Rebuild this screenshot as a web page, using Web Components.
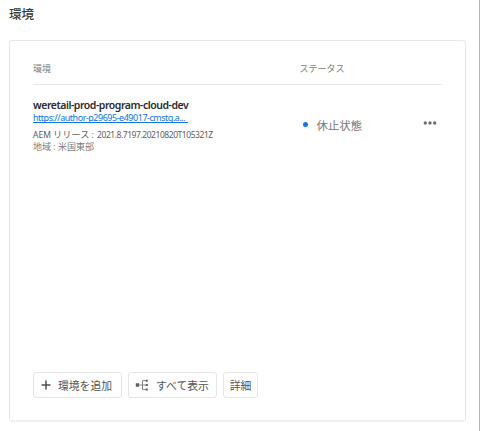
<!DOCTYPE html>
<html lang="ja">
<head>
<meta charset="utf-8">
<title>環境</title>
<style>
html,body{margin:0;height:100%}
body{background:#fff;font-family:"Noto Sans","Noto Sans CJK JP",sans-serif;overflow:hidden}
</style>
</head>
<body>
<env-page>
  <env-card>
    <env-head slot="head"><span>環境</span><span slot="status">ステータス</span></env-head>
    <env-row>
      <span slot="name">weretail-prod-program-cloud-dev</span>
      <span slot="link">https://author-p29695-e49017-cmstg.a...</span>
      <span slot="release">AEM <span style="font-size:9.2px">リリース</span> : <span style="letter-spacing:-.45px;margin-left:1px">2021.8.7197.20210820T105321Z</span></span>
      <span slot="region">地域 : 米国東部</span>
      <span slot="status">休止状態</span>
    </env-row>
    <env-button slot="actions" icon="add" style="width:89px">環境を追加</env-button>
    <env-button slot="actions" icon="tree" style="width:89px">すべて表示</env-button>
    <env-button slot="actions" style="width:35px">詳細</env-button>
  </env-card>
</env-page>
<script>
const define = (name, html, setup) => customElements.define(name, class extends HTMLElement {
  constructor() {
    super();
    this.attachShadow({ mode: 'open' }).innerHTML = html;
    if (setup) setup(this);
  }
});

define('env-page', `<style>
:host{display:flex;flex-direction:column;box-sizing:border-box;width:480px;height:431px;padding:4px 13px 9px 9px;border-right:1px solid #b4b4b4}
h1{margin:0 0 16px;height:20px;font-size:12.5px;line-height:19px;font-weight:500;font-family:"Noto Sans CJK JP",sans-serif;color:#3a3a3a}
</style><h1>環境</h1><slot></slot>`);

define('env-card', `<style>
:host{display:flex;flex-direction:column;flex:1;box-sizing:border-box;border:1px solid #e8e8e8;border-bottom:2px solid #f0f0f0;border-radius:3px;padding:20px 23px 22px}
.body{flex:1}
.actions{display:flex;gap:6px;height:26px}
</style><slot name="head"></slot><div class="body"><slot></slot></div><div class="actions"><slot name="actions"></slot></div>`);

define('env-head', `<style>
:host{display:grid;grid-template-columns:266.5px 1fr;height:23px;border-bottom:1px solid #e8e8e8;font:9px/16px "Noto Sans CJK JP",sans-serif;color:#7c7c7c}
</style><div><slot></slot></div><div><slot name="status"></slot></div>`);

define('env-row', `<style>
:host{display:grid;grid-template-columns:267px 1fr auto;padding-top:12px;color:#6e6e6e}
.info{display:flex;flex-direction:column;align-items:flex-start;white-space:nowrap}
.name{font-size:10.5px;line-height:16px;height:14px;font-weight:600;color:#2c2c2c;letter-spacing:-.47px}
.link{box-sizing:border-box;width:155px;height:12px;font-size:9px;line-height:13px;color:#1473e6;letter-spacing:-.48px;border-bottom:1px solid #1473e6;text-decoration:none}
.meta{font-size:8.5px;line-height:12px;height:12px}
.release{margin-top:6px;color:#606060}
.region{font-size:9px;color:#7a7a7a}
.status{display:flex;align-items:center;height:20px;margin-top:18px;font:11.4px/20px "Noto Sans CJK JP",sans-serif;color:#777}
.dot{width:5px;height:5px;border-radius:50%;background:#1473e6;margin:-2px 9px 0 2.5px}
.more{width:14px;height:4px;margin:24px 5px 0 0;fill:#6e6e6e}
</style>
<div class="info">
<div class="name"><slot name="name"></slot></div>
<a class="link"><slot name="link"></slot></a>
<div class="meta release"><slot name="release"></slot></div>
<div class="meta region"><slot name="region"></slot></div>
</div>
<div class="status"><i class="dot"></i><slot name="status"></slot></div>
<svg class="more" viewBox="0 0 14 4"><circle cx="2.3" cy="2" r="1.7"/><circle cx="7" cy="2" r="1.7"/><circle cx="11.7" cy="2" r="1.7"/></svg>`);

const icons = {
  add: '<svg width="12" height="12" viewBox="0 0 12 12"><path d="M6 1.5v9M1.5 6h9" fill="none" stroke="#505050" stroke-width="1.5"/></svg>',
  tree: '<svg width="14" height="12" viewBox="0 0 14 12"><path d="M.8 4.3h3.2v3.4H.8zM10.8 .8h2v2h-2zM10.8 5h2v2h-2zM10.8 9.4h2v2h-2z" fill="#606060"/><path d="M4 6h7M11 1.6H7.5v8.8H11" fill="none" stroke="#777" stroke-width=".9"/></svg>'
};
define('env-button', `<style>
:host{display:flex;align-items:center;box-sizing:border-box;height:26px;border:1px solid #e6e6e6;border-radius:3px;font:10.8px/24px "Noto Sans CJK JP",sans-serif;color:#555;white-space:nowrap;justify-content:center}
.icon{display:flex}
:host([icon]) {justify-content:flex-start;padding-left:6px}
:host([icon=add]) .icon{margin-right:6px}
:host([icon=tree]) .icon{margin-right:7px}
</style><span class="icon"></span><slot></slot>`, el => {
  el.shadowRoot.querySelector('.icon').innerHTML = icons[el.getAttribute('icon')] || '';
});
</script>
</body>
</html>
